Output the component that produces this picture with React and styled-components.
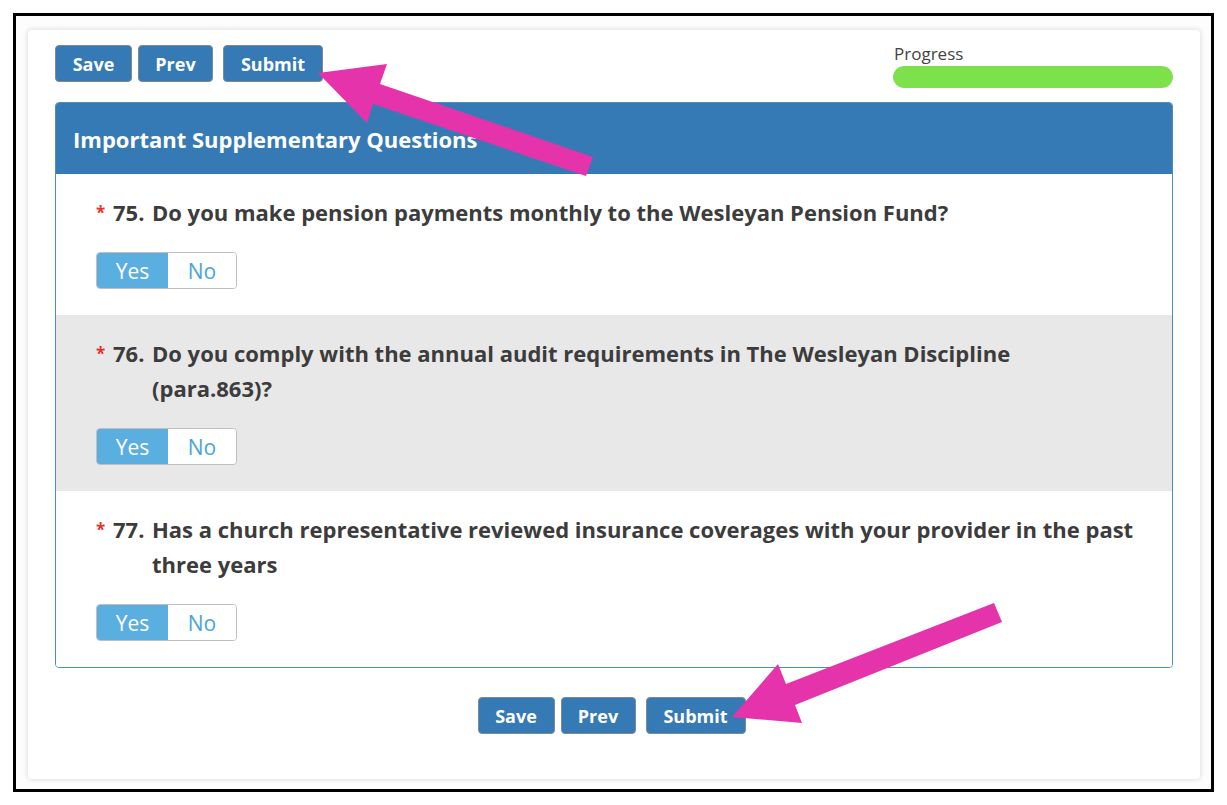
import React, {useState} from 'react';
import styled, {createGlobalStyle} from 'styled-components';

const GlobalStyle = createGlobalStyle`
	html, body {
		margin: 0;
		padding: 0;
		background: #ffffff;
		font-family: "Open Sans", "Liberation Sans", sans-serif;
	}
`

// lines are split where the original form wraps them
const questions = [
	{id: 75, lines: ["Do you make pension payments monthly to the Wesleyan Pension Fund?"]},
	{id: 76, lines: ["Do you comply with the annual audit requirements in The Wesleyan Discipline", "(para.863)?"]},
	{id: 77, lines: ["Has a church representative reviewed insurance coverages with your provider in the past", "three years"]},
];

const Toggle = ({value, onChange}) => {
	return (
	<ToggleGroup>
		<ToggleOption active={value === "yes"} onClick={() => onChange("yes")}>Yes</ToggleOption>
		<ToggleOption active={value === "no"} onClick={() => onChange("no")}>No</ToggleOption>
	</ToggleGroup>
	)
}

const ActionButtons = ({centered}) => (
	<ButtonRow centered={centered}>
		<ActionButton width={77}>Save</ActionButton>
		<ActionButton width={75}>Prev</ActionButton>
		<ActionButton width={100} spaced>Submit</ActionButton>
	</ButtonRow>
)

const Arrows = () => (
	<ArrowLayer width="1227" height="805" viewBox="0 0 1227 805">
		<polygon fill="#e533ab" points="318,73 387,64 380,84 593,157 586,176 373,104 367,123" />
		<polygon fill="#e533ab" points="732,717 778,664 786,684 994,603 1002,622 795,705 802,723" />
	</ArrowLayer>
)

const App = () => {
	const [answers, setAnswers] = useState({75: "yes", 76: "yes", 77: "yes"});

	const setAnswer = (id, v) => {
		setAnswers({...answers, [id]: v});
	}

	return (
	<Page>
		<GlobalStyle />
		<Frame>
			<Card>
				<TopBar>
					<ActionButtons />
					<ProgressBlock>
						<ProgressLabel>Progress</ProgressLabel>
						<ProgressTrack>
							<ProgressFill style={{width: "100%"}} />
						</ProgressTrack>
					</ProgressBlock>
				</TopBar>
				<Panel>
					<PanelHeader>Important Supplementary Questions</PanelHeader>
					{questions.map((q, i) => (
						<QuestionRow key={q.id} shaded={i % 2 === 1}>
							<QuestionLine>
								<Required>*</Required>
								<QuestionNumber>{q.id}.</QuestionNumber>
								<QuestionText>
									{q.lines.map((line, j) => <TextLine key={j}>{line}</TextLine>)}
								</QuestionText>
							</QuestionLine>
							<Toggle value={answers[q.id]} onChange={(v) => setAnswer(q.id, v)} />
						</QuestionRow>
					))}
				</Panel>
				<ActionButtons centered />
			</Card>
		</Frame>
		<Arrows />
	</Page>
	)
}

const Page = styled.div`
	position: relative;
	width: 1227px;
	height: 805px;
	padding: 13px 0 0 13px;
	box-sizing: border-box;
`

const Frame = styled.div`
	width: 1201px;
	height: 779px;
	box-sizing: border-box;
	border: 3px solid #000;
	padding: 14px 11px 10px 12px;
	background: #fdfdfd;
`

const Card = styled.div`
	height: 100%;
	box-sizing: border-box;
	background: #fff;
	border-radius: 4px;
	box-shadow: 0 0 5px 1px rgba(0,0,0,0.12);
	padding: 14px 27px 0 27px;
	display: flex;
	flex-direction: column;
`

const TopBar = styled.div`
	display: flex;
	justify-content: space-between;
	align-items: flex-start;

	& > div:first-child {
		margin-top: 1px;
	}
`

const ButtonRow = styled.div`
	display: flex;
	gap: 6px;
	justify-content: ${p => p.centered ? "center" : "flex-start"};
	margin-top: ${p => p.centered ? "29px" : "0"};
	padding-right: ${p => p.centered ? "5px" : "0"};
`

const ActionButton = styled.button`
	height: 37px;
	width: ${p => p.width}px;
	padding: 0;
	margin-left: ${p => p.spaced ? "4px" : "0"};
	background: #357ab5;
	color: #fff;
	border: 1px solid #7d8a96;
	border-radius: 4px;
	font-family: "Open Sans", "Liberation Sans", sans-serif;
	font-weight: 700;
	font-size: 18px;
	cursor: pointer;
`

const ProgressBlock = styled.div`
	width: 280px;
`

const ProgressLabel = styled.div`
	font-size: 17px;
	color: #444;
	line-height: 20px;
	padding-left: 1px;
	margin-bottom: 2px;
`

const ProgressTrack = styled.div`
	height: 22px;
	border-radius: 11px;
	background: #e6e6e6;
	overflow: hidden;
`

const ProgressFill = styled.div`
	height: 100%;
	background: #7de14b;
	border-radius: 11px;
`

const Panel = styled.div`
	margin-top: 14px;
	border: 1px solid #4b8cc8;
	border-radius: 4px;
	overflow: hidden;
`

const PanelHeader = styled.div`
	background: #357ab5;
	color: #fff;
	height: 71px;
	display: flex;
	align-items: center;
	padding-left: 17px;
	font-size: 22px;
	font-weight: 700;
`

const QuestionRow = styled.div`
	background: ${p => p.shaded ? "#e8e8e8" : "#fff"};
	padding: 21px 20px 26px 40px;
`

const QuestionLine = styled.div`
	display: flex;
	align-items: flex-start;
	color: #3c3c3c;
	font-size: 22px;
	font-weight: 700;
	line-height: 35px;
	margin-bottom: 22px;
`

const Required = styled.span`
	color: #e5322d;
	font-size: 17px;
	width: 17px;
	flex-shrink: 0;
`

const QuestionNumber = styled.span`
	width: 39px;
	flex-shrink: 0;
`

const QuestionText = styled.div`
	flex: 1;
`

const TextLine = styled.div`
	white-space: nowrap;
`

const ToggleGroup = styled.div`
	display: inline-flex;
	border: 1px solid #bfbfbf;
	border-radius: 4px;
	overflow: hidden;
	height: 37px;
	box-sizing: border-box;
`

const ToggleOption = styled.button`
	width: ${p => p.active ? "71px" : "68px"};
	border: 0;
	background: ${p => p.active ? "#5aaee0" : "#fff"};
	color: ${p => p.active ? "#fff" : "#4ba3da"};
	font-family: "Open Sans", "Liberation Sans", sans-serif;
	font-size: 21px;
	padding: 0;
	cursor: pointer;
`

const ArrowLayer = styled.svg`
	position: absolute;
	top: 0;
	left: 0;
	pointer-events: none;
`

export default App;
